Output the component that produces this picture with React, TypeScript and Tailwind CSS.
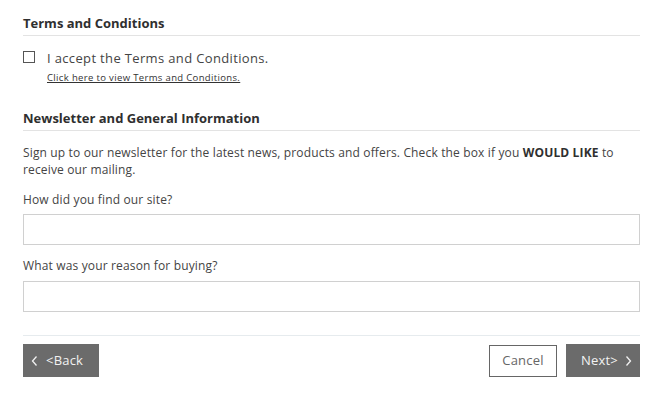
import React from "react";

export default function App() {
  return (
    <div className="w-[650px] h-[397px] bg-white text-[#333] overflow-hidden" style={{ fontFamily: '"Open Sans", "Noto Sans", sans-serif' }}>
      <div className="pl-[23px] pt-[13px]">
        <div className="w-[617px]">
          <h2 className="text-[13px] font-bold leading-[20px] pb-[2px] border-b border-[#e3e3e3] text-[#2f2f2f]">Terms and Conditions</h2>
          <div className="flex mt-[14px]">
            <div className="w-[12px] h-[12px] border border-[#555] mt-[1px] shrink-0" />
            <div className="ml-[12px]">
              <div className="text-[13px] leading-[16px] tracking-[0.35px] text-[#444]">I accept the Terms and Conditions.</div>
              <a className="block mt-[6px] text-[9.5px] leading-[12px] tracking-[0.35px] underline text-[#333]">Click here to view Terms and Conditions.</a>
            </div>
          </div>
          <h2 className="mt-[24px] text-[13px] font-bold leading-[20px] pb-[2px] border-b border-[#e3e3e3] text-[#2f2f2f]">Newsletter and General Information</h2>
          <p className="mt-[13px] text-[12px] leading-[17px] tracking-[0.15px] text-[#444]">
            Sign up to our newsletter for the latest news, products and offers. Check the box if you <b className="font-bold text-[#2f2f2f]">WOULD LIKE</b> to<br />
            receive our mailing.
          </p>
          <label className="block mt-[13px] text-[12px] leading-[17px] tracking-[0.15px] text-[#444]">How did you find our site?</label>
          <input className="block mt-[6px] w-full h-[31px] border border-[#d0d0d0] outline-none" />
          <label className="block mt-[12px] text-[12px] leading-[17px] tracking-[0.15px] text-[#444]">What was your reason for buying?</label>
          <input className="block mt-[7px] w-full h-[31px] border border-[#d0d0d0] outline-none" />
          <div className="mt-[23px] border-t border-[#e6ebee]" />
          <div className="flex items-center justify-between mt-[8px]">
            <button className="flex items-center h-[33px] w-[76px] bg-[#6b6b6b] text-[#f2f2f2] text-[13px] tracking-[0.2px] pl-[7px]">
              <svg width="10" height="12" viewBox="0 0 10 12" className="mr-[6px]"><path d="M6.5 1.5 L2.5 6 L6.5 10.5" fill="none" stroke="#f2f2f2" strokeWidth="1.3" /></svg>
              &lt;Back
            </button>
            <div className="flex items-center gap-[9px]">
              <button className="h-[32px] w-[68px] border border-[#666] text-[#666] text-[13px] tracking-[0.2px] bg-white">Cancel</button>
              <button className="flex items-center h-[33px] w-[74px] bg-[#6b6b6b] text-[#f2f2f2] text-[13px] tracking-[0.2px] pl-[15px]">
                Next&gt;
                <svg width="10" height="12" viewBox="0 0 10 12" className="ml-[5px]"><path d="M3.5 1.5 L7.5 6 L3.5 10.5" fill="none" stroke="#f2f2f2" strokeWidth="1.3" /></svg>
              </button>
            </div>
          </div>
        </div>
      </div>
    </div>
  );
}
